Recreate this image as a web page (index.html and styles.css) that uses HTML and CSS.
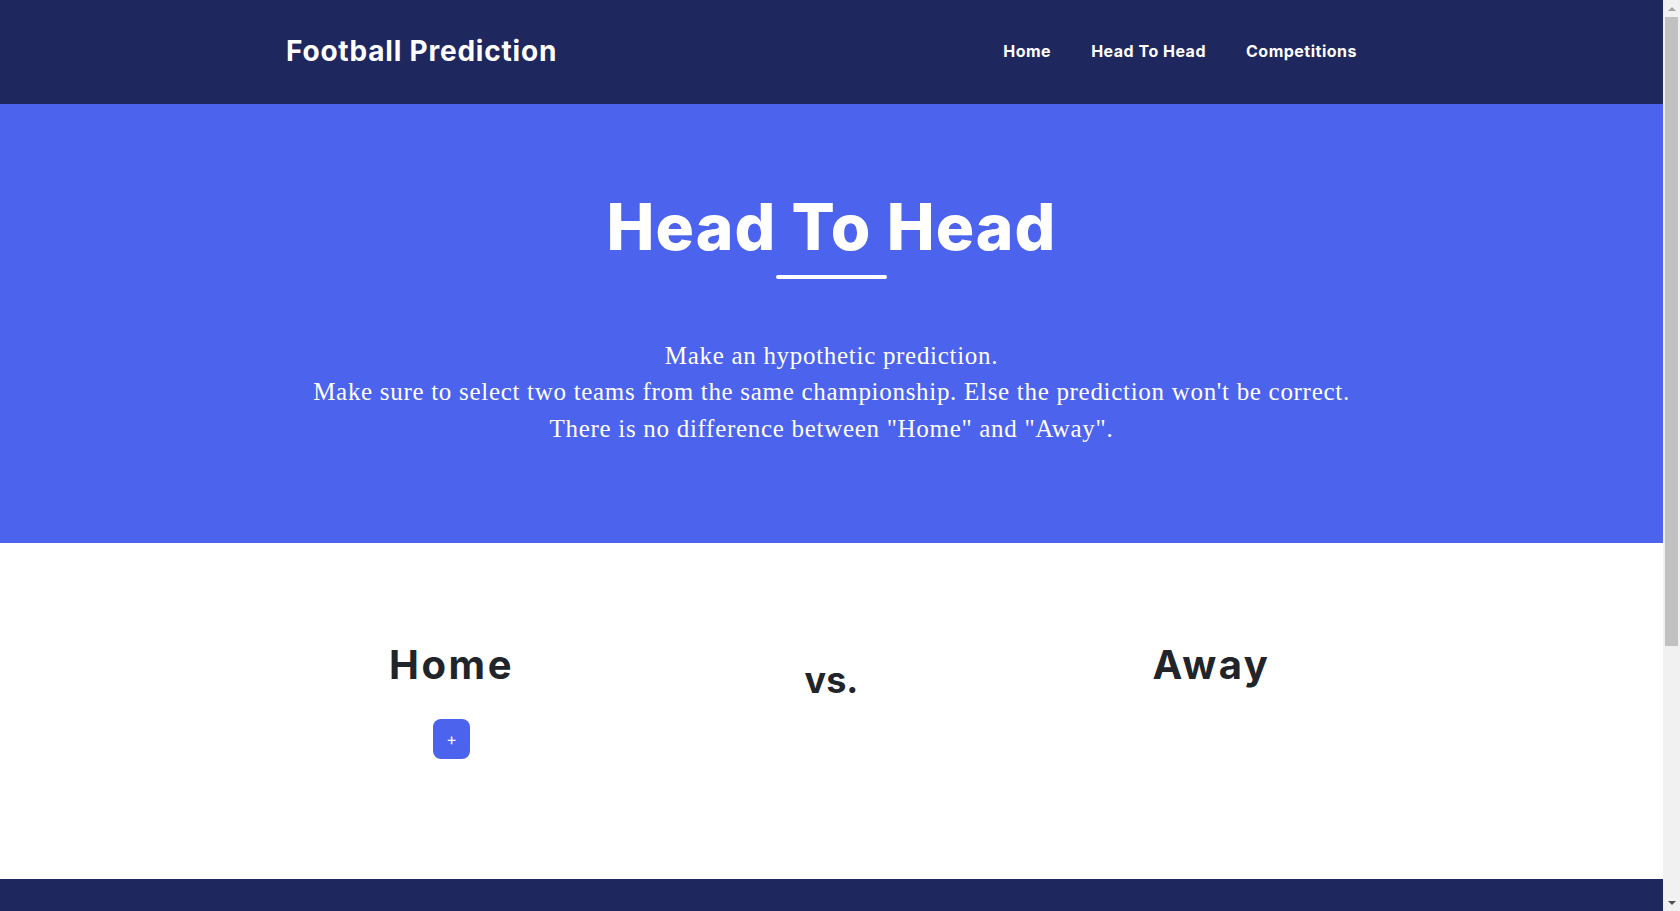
FILE: index.html
```html
<!DOCTYPE html>
<html lang="en">
<head>
<meta charset="utf-8">
<title>Football Prediction - Head To Head</title>
<link rel="stylesheet" href="styles.css">
</head>
<body>
<nav class="navbar">
  <div class="navbar-inner">
    <a class="brand" href="#">Football Prediction</a>
    <ul class="nav-links">
      <li><a href="#">Home</a></li>
      <li><a href="#">Head To Head</a></li>
      <li><a href="#">Competitions</a></li>
    </ul>
  </div>
</nav>
<header class="hero">
  <h1 class="hero-title">Head To Head</h1>
  <div class="hero-rule"></div>
  <p class="hero-text">Make an hypothetic prediction.<br>Make sure to select two teams from the same championship. Else the prediction won't be correct.<br>There is no difference between "Home" and "Away".</p>
</header>
<main class="match">
  <div class="match-row">
    <div class="match-col">
      <h2 class="team-label">Home</h2>
      <button class="add-btn" type="button">+</button>
    </div>
    <div class="match-col">
      <div class="vs">vs.</div>
    </div>
    <div class="match-col">
      <h2 class="team-label">Away</h2>
    </div>
  </div>
</main>
<footer class="footer"></footer>
<div class="scrollbar" aria-hidden="true">
  <span class="sb-btn sb-up"></span>
  <span class="sb-thumb"></span>
  <span class="sb-track"></span>
  <span class="sb-btn sb-down"></span>
</div>
</body>
</html>
```
FILE: styles.css
```css
* { box-sizing: border-box; }
html, body { margin: 0; padding: 0; }
body {
  margin-right: 17px;
  font-family: "Inter", "Liberation Sans", sans-serif;
  color: #212529;
  background: #fff;
}
.navbar {
  background: #1f285e;
  height: 104px;
  display: flex;
  align-items: center;
  padding-bottom: 2px;
}
.navbar-inner {
  width: 1091px;
  margin: 0 auto;
  display: flex;
  justify-content: space-between;
  align-items: center;
}
.brand {
  color: #fff;
  text-decoration: none;
  font-weight: 700;
  font-size: 28px;
  letter-spacing: 0.8px;
}
.nav-links {
  list-style: none;
  margin: 0;
  padding: 0;
  display: flex;
}
.nav-links a {
  display: block;
  padding: 0 20px;
  color: #fff;
  text-decoration: none;
  font-weight: 700;
  font-size: 16px;
  letter-spacing: 0.5px;
}
.hero {
  background: #4c63ed;
  height: 439px;
  color: #fff;
  text-align: center;
  padding-top: 85px;
}
.hero-title {
  margin: 0;
  font-size: 64px;
  line-height: 1.2;
  font-weight: 800;
  letter-spacing: 1.1px;
}
.hero-rule {
  width: 111px;
  height: 4px;
  border-radius: 2px;
  background: #fff;
  margin: 9px auto 0;
}
.hero-text {
  margin: 59px 0 0;
  font-family: "Liberation Serif", serif;
  font-size: 25px;
  line-height: 36.4px;
  letter-spacing: 0.7px;
}
.match {
  height: 336px;
  padding-top: 98px;
}
.match-row {
  width: 1140px;
  margin: 0 auto;
  display: grid;
  grid-template-columns: repeat(3, 1fr);
}
.match-col {
  display: flex;
  flex-direction: column;
  align-items: center;
}
.team-label {
  margin: 0;
  font-size: 40px;
  line-height: 1.2;
  font-weight: 700;
  letter-spacing: 2.6px;
}
.vs {
  margin-top: 18px;
  font-size: 36px;
  line-height: 1.2;
  font-weight: 700;
}
.add-btn {
  margin-top: 30px;
  width: 37px;
  height: 40px;
  border: none;
  border-radius: 8px;
  background: #4c63ed;
  color: #fff;
  font-family: "Inter", sans-serif;
  font-size: 16px;
  padding: 0;
}
.footer {
  background: #1f285e;
  height: 390px;
}
/* browser-like vertical scrollbar drawn over the right edge */
.scrollbar {
  position: fixed;
  top: 0;
  right: 0;
  width: 17px;
  height: 100vh;
  background: #f1f1f1;
  display: flex;
  flex-direction: column;
}
.sb-btn {
  height: 17px;
  flex: none;
  display: flex;
  align-items: center;
  justify-content: center;
}
.sb-btn::before {
  content: "";
  width: 0;
  height: 0;
  border-left: 4px solid transparent;
  border-right: 4px solid transparent;
}
.sb-up::before {
  border-bottom: 4px solid #a3a3a3;
}
.sb-down::before {
  border-top: 4px solid #505050;
}
.sb-thumb {
  height: 629px;
  flex: none;
  margin: 0 2px;
  background: #c1c1c1;
}
.sb-track {
  flex: 1;
}
```
